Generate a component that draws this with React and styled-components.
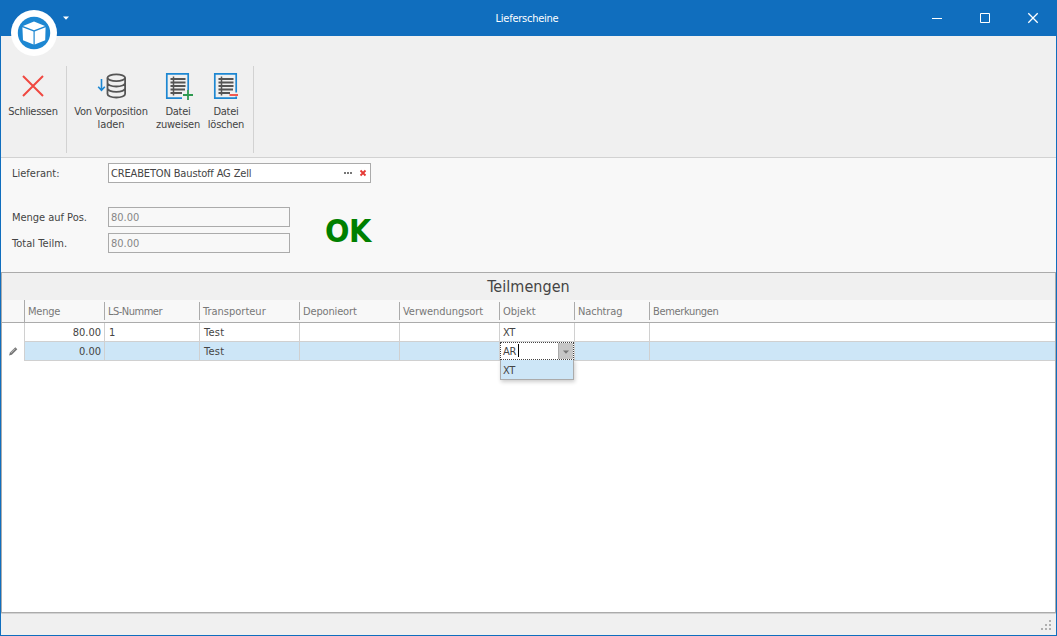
import React from "react";
import styled, { createGlobalStyle } from "styled-components";

const Global = createGlobalStyle`
  * { box-sizing: border-box; }
  body { margin: 0; overflow: hidden; }
`;

const Window = styled.div`
  width: 1057px;
  height: 636px;
  display: flex;
  flex-direction: column;
  border: 1px solid #106ebe;
  border-top: 0;
  background: #f8f8f8;
  color: #444;
  font: 11px/13px "DejaVu Sans Condensed", "DejaVu Sans", sans-serif;
  font-stretch: condensed;
`;

const Label = styled.span`
  display: block;
  white-space: pre;
  letter-spacing: ${(p) => p.$ls ?? -0.25}px;
`;

const TitleBar = styled.header`
  position: relative;
  flex: 0 0 36px;
  display: grid;
  grid-template-columns: 144px 1fr 144px;
  margin: 0 -1px;
  background: #106ebe;
  color: #fff;
`;

const QuickAccess = styled.div`
  padding: 16px 0 0 63px;
  line-height: 0;
`;

const WindowTitle = styled.h1`
  margin: 0;
  padding-top: 12px;
  display: flex;
  justify-content: center;
  padding-right: 3px;
  font: inherit;
`;

const Controls = styled.div`
  height: 36px;
`;

const AppButton = styled.div`
  position: absolute;
  left: 11px;
  top: 10px;
  width: 46px;
  height: 46px;
  z-index: 2;
`;

const Ribbon = styled.nav`
  flex: 0 0 122px;
  display: flex;
  padding-top: 30px;
  background: #f0f0f0;
  border-bottom: 1px solid #d2d2d2;
`;

const RibbonGroup = styled.div`
  display: flex;
  width: ${(p) => p.$w}px;
  height: 87px;
  border-right: 1px solid #d2d2d2;
`;

const RibbonButton = styled.div`
  width: ${(p) => p.$w}px;
  padding-top: 4px;
  display: flex;
  flex-direction: column;
  align-items: center;
  svg { display: block; flex: 0 0 32px; margin-bottom: 3px; }
`;

const Form = styled.section`
  flex: 0 0 114px;
  display: flex;
  padding: 5px 0 0 11px;
`;

const Fields = styled.div`
  width: 313px;
`;

const Field = styled.div`
  display: grid;
  grid-template-columns: 96px auto;
  align-items: center;
  height: 20px;
  margin-bottom: ${(p) => p.$gap}px;
`;

const Input = styled.div`
  width: ${(p) => p.$w}px;
  height: 20px;
  padding: 0 2px;
  display: flex;
  align-items: center;
  justify-content: space-between;
  border: 1px solid #ababab;
  background: ${(p) => (p.$disabled ? "#f8f8f8" : "#fff")};
  color: ${(p) => (p.$disabled ? "#868686" : "#444")};
`;

const Status = styled.strong`
  padding-top: 48px;
  font: bold 32px/40px "DejaVu Sans Condensed", "DejaVu Sans", sans-serif;
  font-stretch: condensed;
  letter-spacing: -0.5px;
  color: #008000;
`;

const Grid = styled.section`
  flex: 1;
  min-height: 0;
  border: 1px solid #ababab;
  background: #fff;
`;

const GridTitle = styled.h2`
  margin: 0;
  height: 27px;
  display: flex;
  justify-content: center;
  background: #f0f0f0;
  font-size: 16px;
  line-height: 27px;
  font-weight: normal;
`;

const columns = "22px 80px 95px 100px 100px 100px 75px 75px 1fr";

const HeaderRow = styled.div`
  display: grid;
  grid-template-columns: ${columns};
  height: 23px;
  background: #f8f8f8;
  border-bottom: 1px solid #ababab;
  color: #777;
`;

const HeaderCell = styled.div`
  height: ${(p) => (p.$first ? 22 : 18)}px;
  margin-top: ${(p) => (p.$first ? 0 : 2)}px;
  padding: ${(p) => (p.$first ? 5 : 3)}px 0 0 3px;
  border-left: ${(p) => (p.$blank ? 0 : 1)}px solid #ababab;
`;

const Row = styled.div`
  display: grid;
  grid-template-columns: ${columns};
  height: 19px;
`;

const Cell = styled.div`
  position: relative;
  height: 19px;
  padding: 3px 3px 0 ${(p) => p.$pad ?? 3}px;
  display: flex;
  justify-content: ${(p) => (p.$right ? "flex-end" : "flex-start")};
  border-left: 1px solid #d0d0d0;
  border-bottom: 1px solid #d0d0d0;
  background: ${(p) => (p.$active ? "#cde6f7" : "#fff")};
`;

const Indicator = styled.div`
  padding: 4px 0 0 6px;
  line-height: 0;
`;

const Editor = styled.div`
  position: absolute;
  left: 0;
  top: 0;
  width: 74px;
  height: 18px;
  display: flex;
  justify-content: space-between;
  border: 1px dotted #444;
  background: #fff;
  padding-left: 2px;
  z-index: 2;
`;

const EditText = styled.div`
  height: 13px;
  margin-top: 1px;
  padding-top: 1px;
  border-right: 1px solid #000;
  width: 16px;
`;

const DropButton = styled.div`
  width: 15px;
  background: #c6c6c6;
  border-left: 1px solid #ababab;
  padding: 7px 0 0 4px;
  line-height: 0;
`;

const Popup = styled.div`
  position: absolute;
  left: 0;
  top: 17px;
  width: 74px;
  height: 21px;
  padding: 4px 2px;
  background: #cde6f7;
  border: 1px solid #ababab;
  box-shadow: 1px 2px 4px rgba(0, 0, 0, 0.2);
  z-index: 1;
`;

const StatusBar = styled.footer`
  flex: 0 0 22px;
  display: flex;
  justify-content: flex-end;
  align-items: flex-end;
  padding: 0 4px 4px 0;
  background: #f0f0f0;
  border-top: 1px solid #d2d2d2;
  line-height: 0;
`;

const Triangle = ({ color }) => (
  <svg width="7" height="4" viewBox="0 0 7 4">
    <path d="M0 .5h6L3 3.800z" fill={color} />
  </svg>
);

const Logo = () => (
  <svg width="46" height="46" viewBox="0 0 46 46">
    <circle cx="23" cy="23" r="23" fill="#fff" />
    <circle cx="23" cy="23" r="16.200" fill="#1d87d2" />
    <path d="M23 11.500 34 16 23 20.200 12 16z" fill="#fff" />
    <path d="M11.400 17.200 22.500 21.400V34.500L12 30.300zM34.600 17.200 23.700 21.400V34.500L34.200 30.300z" fill="#fff" />
  </svg>
);

const CloseIcon = () => (
  <svg width="32" height="32" viewBox="0 0 32 32">
    <path d="M6 6 26 26M26 6 6 26" stroke="#f04840" strokeWidth="2" fill="none" />
  </svg>
);

const DatabaseIcon = () => (
  <svg width="32" height="32" viewBox="0 0 32 32" fill="none">
    <path d="M6.500 9V20.300M3.200 16.800 6.500 20.300 9.800 16.800" stroke="#1d87d2" strokeWidth="1.600" />
    <g stroke="#555" strokeWidth="1.800">
      <ellipse cx="21.300" cy="7.800" rx="8.800" ry="3.400" />
      <path d="M12.500 7.800V24c0 2 3.900 3.500 8.800 3.500s8.800-1.500 8.800-3.500V7.800M12.500 13c0 2 3.900 3.500 8.800 3.500s8.800-1.500 8.800-3.500M12.500 18.300c0 2 3.900 3.500 8.800 3.500s8.800-1.500 8.800-3.500" />
    </g>
  </svg>
);

const FileIcon = ({ add }) => (
  <svg width="32" height="32" viewBox="0 0 32 32" fill="none">
    <path d={add ? "M20 28.200H4.800V3.800H26.200V20" : "M19 28.200H4.800V3.800H26.200V22.500M26.200 26.500V28.200H19"} stroke="#1d87d2" strokeWidth="1.700" />
    <path d="M8.500 9H23.500M8.500 12.500H23.500M8.500 16H23.500M8.500 19.500H23M8.500 23H20" stroke="#555" strokeWidth="1.800" />
    <path d="M11.500 6.500V25.500" stroke="#555" strokeWidth="1.500" />
    {add ? (
      <path d="M21 25H31M26 20V30" stroke="#2e9a50" strokeWidth="1.800" />
    ) : (
      <path d="M19.500 25H28" stroke="#f04840" strokeWidth="1.800" />
    )}
  </svg>
);

const Grip = () => (
  <svg width="11" height="11" viewBox="0 0 11 11" fill="#b0b0b0">
    <path d="M8 0h2v2H8zM4 4h2v2H4zM8 4h2v2H8zM0 8h2v2H0zM4 8h2v2H4zM8 8h2v2H8z" />
  </svg>
);

const Pencil = () => (
  <svg width="11" height="11" viewBox="0 0 11 11">
    <path d="M1 9.500 2 6.600 7.300 1.200 9.300 3.200 3.800 8.700z" fill="#777" />
    <path d="M2.800 7 7 2.800" stroke="#ccc" strokeWidth=".8" />
  </svg>
);

const headers = [
  ["Menge", -0.25],
  ["LS-Nummer", -0.5],
  ["Transporteur", 0],
  ["Deponieort", -0.15],
  ["Verwendungsort", -0.05],
  ["Objekt", 0],
  ["Nachtrag", -0.15],
  ["Bemerkungen", -0.35],
];

export default function App() {
  return (
    <>
      <Global />
      <Window>
        <TitleBar>
          <QuickAccess><Triangle color="#fff" /></QuickAccess>
          <WindowTitle><Label>Lieferscheine</Label></WindowTitle>
          <Controls>
            <svg width="144" height="36" viewBox="0 0 144 36" fill="none" stroke="#fff">
              <path d="M19 18.500H29M67.500 13.500H76.500V22.500H67.500z" />
              <path d="M115.300 13.300 124.700 22.700M124.700 13.300 115.300 22.700" strokeWidth="1.300" />
            </svg>
          </Controls>
          <AppButton><Logo /></AppButton>
        </TitleBar>

        <Ribbon>
          <RibbonGroup $w={66}>
            <RibbonButton $w={64}>
              <CloseIcon />
              <Label $ls={-0.3}>Schliessen</Label>
            </RibbonButton>
          </RibbonGroup>
          <RibbonGroup $w={187}>
            <RibbonButton $w={88}>
              <DatabaseIcon />
              <Label $ls={-0.2}>Von Vorposition</Label>
              <Label $ls={-0.1}>laden</Label>
            </RibbonButton>
            <RibbonButton $w={46}>
              <FileIcon add />
              <Label>Datei</Label>
              <Label>zuweisen</Label>
            </RibbonButton>
            <RibbonButton $w={50}>
              <FileIcon />
              <Label>Datei</Label>
              <Label>löschen</Label>
            </RibbonButton>
          </RibbonGroup>
        </Ribbon>

        <Form>
          <Fields>
            <Field $gap={24}>
              <Label $ls={0}>Lieferant:</Label>
              <Input $w={263}>
                <Label $ls={-0.15}>CREABETON Baustoff AG Zell</Label>
                <svg width="24" height="10" viewBox="0 0 24 10">
                  <path d="M0 4h2v2H0zM3 4h2v2H3zM6 4h2v2H6z" fill="#777" />
                  <path d="M16.500 2.500 21.500 7.500M21.500 2.500 16.500 7.500" stroke="#e53935" strokeWidth="1.800" />
                </svg>
              </Input>
            </Field>
            <Field $gap={6}>
              <Label $ls={-0.03}>Menge auf Pos.</Label>
              <Input $w={182} $disabled><Label $ls={0}>80.00</Label></Input>
            </Field>
            <Field $gap={0}>
              <Label $ls={0.05}>Total Teilm.</Label>
              <Input $w={182} $disabled><Label $ls={0}>80.00</Label></Input>
            </Field>
          </Fields>
          <Status>OK</Status>
        </Form>

        <Grid>
          <GridTitle><Label $ls={0.05}>Teilmengen</Label></GridTitle>
          <HeaderRow>
            <HeaderCell $blank />
            {headers.map(([text, ls], i) => (
              <HeaderCell key={text} $first={i === 0}>
                <Label $ls={ls}>{text}</Label>
              </HeaderCell>
            ))}
          </HeaderRow>
          <Row>
            <Indicator />
            <Cell $right><Label $ls={0}>80.00</Label></Cell>
            <Cell $pad={4}><Label>1</Label></Cell>
            <Cell $pad={4}><Label $ls={0.3}>Test</Label></Cell>
            <Cell />
            <Cell />
            <Cell><Label>XT</Label></Cell>
            <Cell />
            <Cell />
          </Row>
          <Row>
            <Indicator><Pencil /></Indicator>
            <Cell $active $right><Label $ls={0}>0.00</Label></Cell>
            <Cell $active />
            <Cell $active $pad={4}><Label $ls={0.3}>Test</Label></Cell>
            <Cell $active />
            <Cell $active />
            <Cell $active>
              <Editor>
                <EditText><Label>AR</Label></EditText>
                <DropButton><Triangle color="#777" /></DropButton>
              </Editor>
              <Popup><Label>XT</Label></Popup>
            </Cell>
            <Cell $active />
            <Cell $active />
          </Row>
        </Grid>
        <StatusBar><Grip /></StatusBar>
      </Window>
    </>
  );
}
